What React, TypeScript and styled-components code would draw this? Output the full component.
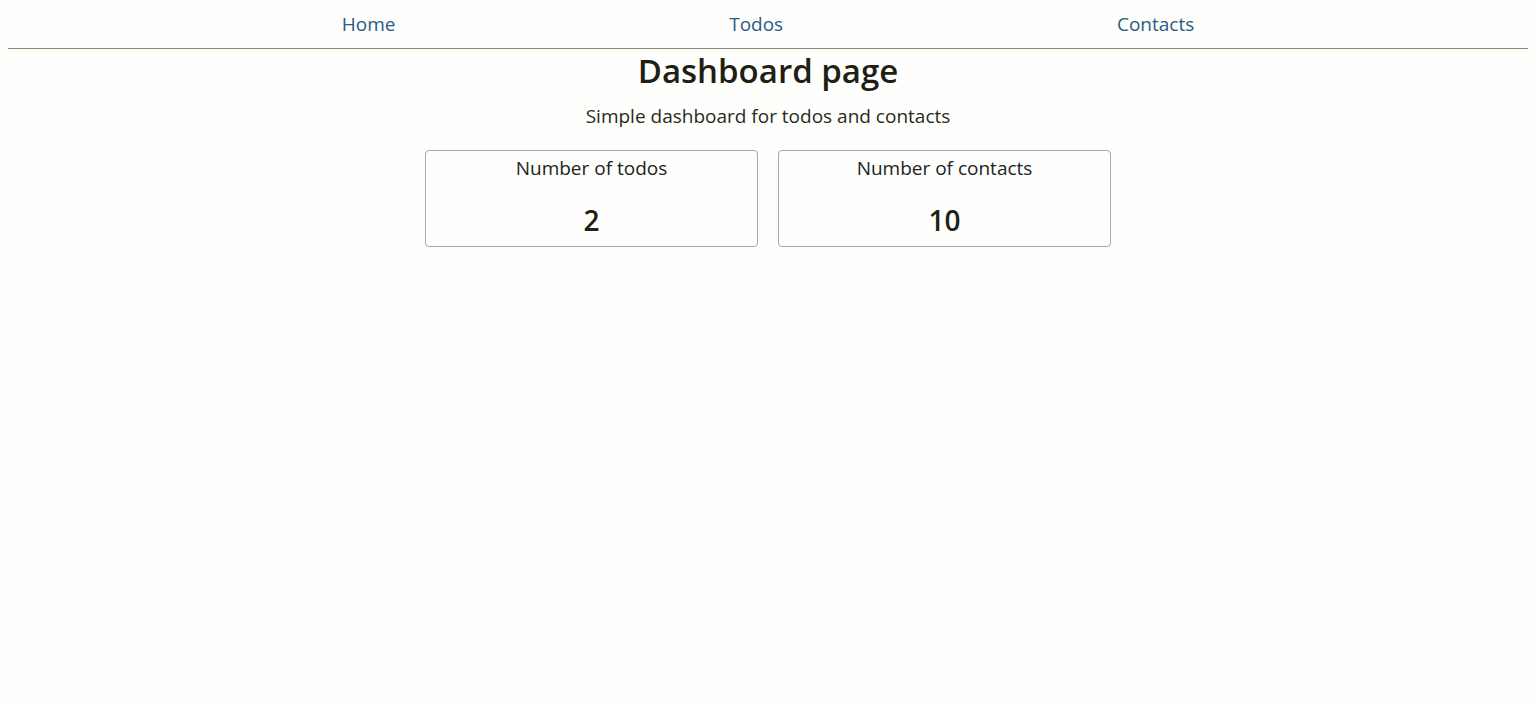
import React from "react";
import styled, { createGlobalStyle } from "styled-components";

const GlobalStyle = createGlobalStyle`
  body {
    margin: 0 8px;
    background: #fefefc;
    font-family: "Open Sans", "Noto Sans", sans-serif;
    color: #222;
  }
`;

const Nav = styled.nav`
  display: flex;
  justify-content: space-evenly;
  align-items: center;
  height: 49px;
  box-sizing: border-box;
  border-bottom: 1px solid #8c8a6c;
`;

const NavLink = styled.a`
  color: #2c5a86;
  font-size: 19px;
  text-decoration: none;
  cursor: pointer;
`;

const Main = styled.main`
  display: flex;
  flex-direction: column;
  align-items: center;
`;

const Title = styled.h1`
  margin: 0;
  font-size: 33px;
  line-height: 44px;
  font-weight: 600;
  color: #1f1f14;
`;

const Subtitle = styled.p`
  margin: 10px 0 0;
  font-size: 19px;
  color: #2a2a1a;
`;

const Cards = styled.div`
  display: flex;
  gap: 20px;
  margin-top: 21px;
`;

const Card = styled.div`
  width: 333px;
  height: 97px;
  box-sizing: border-box;
  border: 1px solid #a9a9a9;
  border-radius: 4px;
  display: flex;
  flex-direction: column;
  align-items: center;
  padding-top: 4px;
`;

const CardLabel = styled.div`
  font-size: 19px;
  color: #222;
`;

const CardValue = styled.div`
  margin-top: 20px;
  font-size: 28px;
  font-weight: 600;
  color: #1f1f14;
`;

const stats = [
  { label: "Number of todos", value: 2 },
  { label: "Number of contacts", value: 10 },
];

export default function App() {
  return (
    <>
      <GlobalStyle />
      <Nav>
        <NavLink>Home</NavLink>
        <NavLink>Todos</NavLink>
        <NavLink>Contacts</NavLink>
      </Nav>
      <Main>
        <Title>Dashboard page</Title>
        <Subtitle>Simple dashboard for todos and contacts</Subtitle>
        <Cards>
          {stats.map((s) => (
            <Card key={s.label}>
              <CardLabel>{s.label}</CardLabel>
              <CardValue>{s.value}</CardValue>
            </Card>
          ))}
        </Cards>
      </Main>
    </>
  );
}
